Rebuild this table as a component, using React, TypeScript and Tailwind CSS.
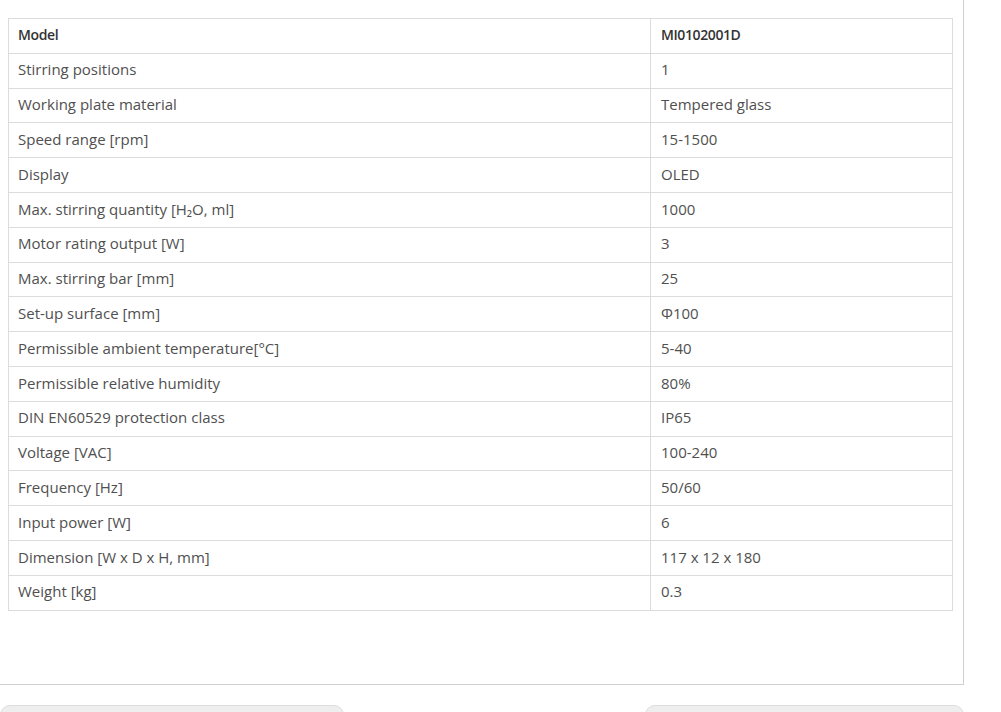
const specs: [string, string][] = [
  ['Model', 'MI0102001D'],
  ['Stirring positions', '1'],
  ['Working plate material', 'Tempered glass'],
  ['Speed range [rpm]', '15-1500'],
  ['Display', 'OLED'],
  ['Max. stirring quantity [H₂O, ml]', '1000'],
  ['Motor rating output [W]', '3'],
  ['Max. stirring bar [mm]', '25'],
  ['Set-up surface [mm]', 'Φ100'],
  ['Permissible ambient temperature[°C]', '5-40'],
  ['Permissible relative humidity', '80%'],
  ['DIN EN60529 protection class', 'IP65'],
  ['Voltage [VAC]', '100-240'],
  ['Frequency [Hz]', '50/60'],
  ['Input power [W]', '6'],
  ['Dimension [W x D x H, mm]', '117 x 12 x 180'],
  ['Weight [kg]', '0.3'],
];

export default function App() {
  return (
    <div className="w-[1001px] h-[712px] overflow-hidden bg-white font-['Open_Sans',sans-serif] text-[15px] text-[#505050]">
      <div className="w-[964px] h-[685px] border-r border-b border-[#cfcfcf] pt-[18px] pl-[8px]">
        <table className="w-[945px] border-collapse table-fixed">
          <colgroup>
            <col className="w-[642px]" />
            <col />
          </colgroup>
          <tbody>
            {specs.map(([label, value], i) => (
              <tr key={label} className="h-[34.8px]">
                <td className={`border border-[#dcdcdc] px-[9px] pb-[2px] ${i === 0 ? 'font-semibold text-[14px] tracking-[-0.4px] text-[#333]' : ''}`}>{label}</td>
                <td className={`border border-[#dcdcdc] px-[10px] pb-[2px] ${i === 0 ? 'font-semibold text-[14px] tracking-[-0.4px] text-[#333]' : ''}`}>{value}</td>
              </tr>
            ))}
          </tbody>
        </table>
      </div>
      <div className="w-[964px] flex justify-between mt-[20px]">
        <div className="w-[344px] h-[30px] bg-[#eeeeee] border border-[#dddddd] rounded-[10px]" />
        <div className="w-[319px] h-[30px] bg-[#eeeeee] border border-[#dddddd] rounded-[10px]" />
      </div>
    </div>
  );
}
